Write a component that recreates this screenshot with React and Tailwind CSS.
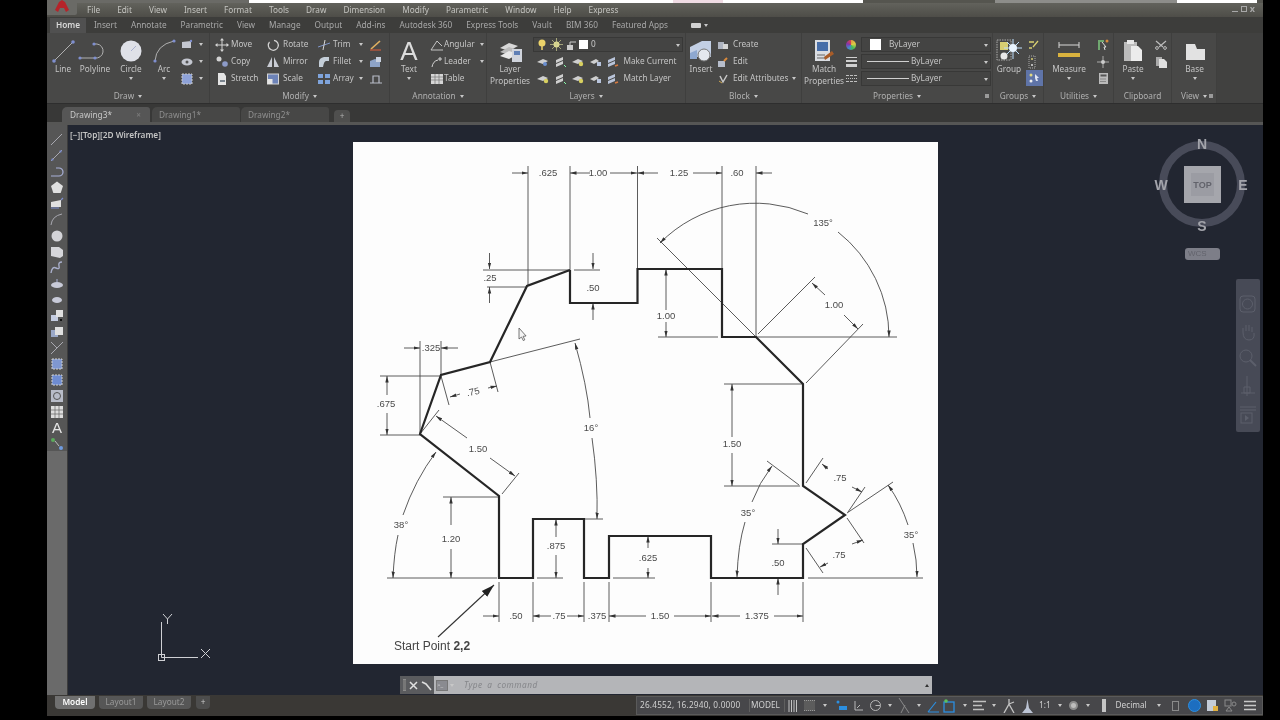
import React from "react";

// ---------- small helpers ----------
const Svg = ({ w = 14, h = 14, children }) => (
  <svg width={w} height={h} viewBox={`0 0 ${w} ${h}`} fill="none" className="block shrink-0">
    {children}
  </svg>
);

const Caret = ({ className = "" }) => (
  <span className={`inline-block w-0 h-0 border-x-[2.5px] border-x-transparent border-t-[3px] border-t-[#c8c8c8] ${className}`} />
);

// ---------- ribbon icons ----------
const LG = "#d4d4d4";
const BL = "#7f8fcf";
const icons = {
  rect: <Svg><path d="M2 4l9-1v7H2z" fill="#c4c7d0" /><circle cx="11" cy="3" r="1.2" fill={BL} /></Svg>,
  ell: <Svg><ellipse cx="7" cy="7" rx="5.5" ry="3.5" fill="#c4c7d0" /><circle cx="7" cy="7" r="1.5" fill="#555" /></Svg>,
  hatch: <Svg><rect x="2" y="2" width="10" height="10" fill="#8ea2d8" stroke="#c8c8c8" strokeDasharray="2 1" /></Svg>,
  move: <Svg><path d="M7 1v12M1 7h12" stroke={LG} /><path d="M7 0l2 2.5H5zM7 14l2-2.5H5zM0 7l2.500-2v4zM14 7l-2.500-2v4z" fill={LG} /></Svg>,
  copy: <Svg><circle cx="4" cy="4" r="2.500" fill={LG} /><circle cx="10" cy="9" r="2.800" fill="#8d9bc8" /></Svg>,
  stretch: <Svg><path d="M3 1h6l2 3v9H3z" fill="#e4e4e4" /><path d="M5 9h5" stroke="#345" strokeWidth="1.200" /></Svg>,
  rotate: <Svg><path d="M8 2.300A5 5 0 1 1 3.500 4" stroke={LG} strokeWidth="1.200" /></Svg>,
  mirror: <Svg><path d="M6 2L1 12h5zM8 2l5 10H8z" fill="#c9ccd4" /></Svg>,
  scale: <Svg><rect x="1.500" y="2" width="11" height="10" fill="#6d83b8" stroke={LG} /><rect x="1.500" y="7" width="5" height="5" fill="#e4e4e4" /></Svg>,
  trim: <Svg><path d="M1 9l12-4" stroke="#7f95c8" /><path d="M8 2L6 12" stroke={LG} /></Svg>,
  fillet: <Svg><path d="M2 12V7q0-4 5-5h5v4H9q-2 0-3 6z" fill="#c4ced8" /></Svg>,
  array: <Svg><path d="M1 2h5v4H1zM8 2h5v4H8zM1 8h5v4H1zM8 8h5v4H8z" fill="#7fa4dc" /></Svg>,
  pen: <Svg><path d="M2 11l9-8" stroke="#e0b060" strokeWidth="1.600" /><path d="M1 12h11" stroke="#c85a3c" strokeWidth="1.200" /></Svg>,
  blocks: <Svg><path d="M1 6l5-2 5 2v6H1z" fill="#8ea4c8" /><path d="M7 2h5v5H7z" fill="#c9d2e0" /></Svg>,
  stamp: <Svg><path d="M1 11h12M4 11V4h6v7" stroke="#b8bcc8" strokeWidth="1.200" /></Svg>,
  angular: <Svg><path d="M1 12h12M1 12l6-9 5 5" stroke="#c4c4c4" /></Svg>,
  leader: <Svg><path d="M2 12q1-6 6-7" stroke={LG} /><path d="M10 2v4M8 4h4" stroke={LG} /></Svg>,
  table: <Svg><path d="M1 2h12v10H1z" fill="#d6d6d6" /><path d="M1 5h12M1 8h12M5 2v10M9 2v10" stroke="#777" strokeWidth=".7" /></Svg>,
  layA: <Svg><path d="M1 7l6-3 5 2-5 3z" fill="#cfcfcf" /><circle cx="9" cy="9" r="2" fill="#6b8fd0" /></Svg>,
  layB: <Svg><path d="M2 5l7-3v3l-7 3zM2 9l7-3v3l-7 3z" fill="#cfcfcf" /><path d="M10 10l2 2" stroke="#8fa" /></Svg>,
  layC: <Svg><path d="M1 7l6-3 5 2-5 3z" fill="#cfcfcf" /><circle cx="10" cy="9" r="2.200" fill="#d8d060" /></Svg>,
  layD: <Svg><path d="M1 7l6-3 3 2-5 3z" fill="#cfcfcf" /><rect x="8" y="7" width="4" height="4" fill="#b8c4dc" /></Svg>,
  layE: <Svg><path d="M2 5l7-3v3l-7 3zM2 9l7-3v3l-7 3z" fill="#b9c4da" /><path d="M9 11l3-1" stroke="#d87a40" strokeWidth="1.500" /></Svg>,
  create: <Svg><path d="M2 4h6v7H2z" fill="#aeb4c0" /><path d="M7 6h5v5H7z" fill="#d6d6d6" /></Svg>,
  edit: <Svg><path d="M2 6h7v6H2z" fill="#b6bdcb" /><path d="M8 6l3-3" stroke="#d88a3c" strokeWidth="2" /></Svg>,
  attrs: <Svg><path d="M4 4l3 6 4-7" stroke="#c8c8c8" strokeWidth="1.500" /><path d="M3 9l3 2" stroke="#d0a850" /></Svg>,
};

const LARGE = {
  line: <Svg w={24} h={24}><path d="M3 22L22 3" stroke="#b0b0b0" /><circle cx="3" cy="22" r="1.800" fill={BL} /><circle cx="22" cy="3" r="1.800" fill={BL} /></Svg>,
  poly: <Svg w={34} h={24}><path d="M2 19h15a7 7 0 0 0 2-14h-3" stroke="#b0b0b0" /><circle cx="2" cy="19" r="1.600" fill={BL} /><circle cx="17" cy="19" r="1.600" fill={BL} /><circle cx="16" cy="5" r="1.600" fill={BL} /></Svg>,
  circle: <Svg w={24} h={24}><circle cx="12" cy="12" r="10.500" fill="#dfe1e8" /><path d="M12 12l5-5" stroke="#a8b0d0" /></Svg>,
  arc: <Svg w={24} h={24}><path d="M3 22Q4 6 22 2" stroke="#b0b0b0" /><circle cx="3" cy="22" r="1.600" fill={BL} /><circle cx="22" cy="2" r="1.600" fill={BL} /></Svg>,
  text: <span className="block text-[26px] leading-[24px] text-[#dcdcdc] font-['Liberation_Sans']">A</span>,
  layers: <Svg w={26} h={24}><path d="M3 9l9-5 9 3-9 5z" fill="#d8d8d8" /><path d="M3 13l9-5 9 3-9 5z" fill="#bbb" /><path d="M3 17l9-5 9 3-9 5z" fill="#e8e8e8" /><rect x="15" y="10" width="10" height="13" fill="#d0d4dc" /><rect x="17" y="12" width="6" height="4" fill="#5f7fb5" /></Svg>,
  insert: <Svg w={24} h={24}><path d="M1 8l12-6h9v16H8l-7-4z" fill="#c2cfe4" /><circle cx="15" cy="16" r="6" fill="#e4e8ee" stroke="#777" /><path d="M1 14l7-3v9H1z" fill="#8ea8d0" /></Svg>,
  match: <Svg w={24} h={24}><rect x="3" y="1" width="15" height="21" fill="#dadde2" /><rect x="5" y="3" width="11" height="9" fill="#476ea9" /><path d="M5 16h8M5 19h8" stroke="#666" /><path d="M13 21l9-6-2-3-8 6z" fill="#a85c28" /></Svg>,
  group: <Svg w={26} h={24}><rect x="1" y="1" width="14" height="20" stroke="#aaa" strokeDasharray="1.500 1" /><rect x="4" y="3" width="8" height="8" fill="#d8cf72" /><circle cx="8" cy="17" r="3.500" fill="#e8e8e8" /><path d="M17 0v20M8 9h18M11 3l12 12M23 3L11 15" stroke="#bfe0ff" /><circle cx="17" cy="9" r="4" fill="#e8f4ff" /></Svg>,
  measure: <Svg w={24} h={24}><path d="M2 6h20M2 3v6M22 3v6" stroke="#d8d8d8" /><rect x="1" y="14" width="22" height="4" fill="#d9b23e" /></Svg>,
  paste: <Svg w={22} h={24}><rect x="2" y="3" width="13" height="19" fill="#bcbcbc" /><rect x="5" y="1" width="7" height="4" fill="#e8e8e8" /><path d="M9 7h7l4 4v11H9z" fill="#ececec" /></Svg>,
  base: <Svg w={22} h={24}><path d="M2 5h9l2 5h8v11H2z" fill="#e2e2e2" /></Svg>,
};

// ---------- ribbon blocks ----------
const Row = ({ icon, label, caret, gap = "gap-[3px]", className = "" }) => (
  <div className={`h-[17px] flex items-center ${gap} ${className}`}>
    <span className="w-[13px] flex justify-center">{icons[icon]}</span>
    <span className="whitespace-nowrap">{label}</span>
    {caret && <Caret className="ml-auto" />}
  </div>
);

const Large = ({ icon, lines, caret, w }) => (
  <div className={`${w} shrink-0 flex flex-col items-center pt-[5px]`}>
    <div className="h-[25px] flex items-center justify-center">{LARGE[icon]}</div>
    {lines.map((l) => (
      <div key={l} className="h-[12px] leading-[12px] whitespace-nowrap">{l}</div>
    ))}
    {caret && <Caret className="mt-[2px]" />}
  </div>
);

const Panel = ({ w, label, caret, launcher, children }) => (
  <div className={`${w} shrink-0 h-full flex flex-col border-r border-[#3f3f3e]`}>
    <div className="h-[56px] flex">{children}</div>
    <div className="h-[15px] pt-px flex items-center justify-center gap-[4px] text-[#b0b0b0] relative">
      {label}
      {caret && <Caret />}
      {launcher && <span className="absolute right-[3px] top-[6px] w-[4px] h-[4px] bg-[#9a9a9a]" />}
    </div>
  </div>
);

const Column = ({ w, children, className = "" }) => (
  <div className={`${w} shrink-0 pt-[3px] ${className}`}>{children}</div>
);

const Dropdown = ({ children, className = "" }) => (
  <div className={`flex items-center bg-[#444443] border border-[#383837] relative ${className}`}>
    {children}
    <Caret className="absolute right-[2px] top-[6px]" />
  </div>
);

const Ribbon = () => (
  <div className="h-[71px] flex bg-[#484847] text-[#c4c4c4] text-[8.25px] border-b border-[#2e2e2e]">
    <Panel w="w-[163px]" label="Draw" caret>
      <div className="w-[3px]" />
      <Large icon="line" lines={["Line"]} w="w-[26px]" />
      <Large icon="poly" lines={["Polyline"]} w="w-[38px]" />
      <Large icon="circle" lines={["Circle"]} caret w="w-[34px]" />
      <Large icon="arc" lines={["Arc"]} caret w="w-[32px]" />
      <Column w="w-[28px]">
        {["rect", "ell", "hatch"].map((i) => (
          <div key={i} className="h-[17px] flex items-center gap-[5px]">
            {icons[i]}
            <Caret />
          </div>
        ))}
      </Column>
    </Panel>
    <Panel w="w-[180px]" label="Modify" caret>
      <div className="w-[5px]" />
      <Column w="w-[51px]">
        <Row icon="move" label="Move" />
        <Row icon="copy" label="Copy" />
        <Row icon="stretch" label="Stretch" />
      </Column>
      <Column w="w-[51px]">
        <Row icon="rotate" label="Rotate" gap="gap-[4px]" />
        <Row icon="mirror" label="Mirror" gap="gap-[4px]" />
        <Row icon="scale" label="Scale" gap="gap-[4px]" />
      </Column>
      <Column w="w-[46px]">
        <Row icon="trim" label="Trim" caret />
        <Row icon="fillet" label="Fillet" caret />
        <Row icon="array" label="Array" caret />
      </Column>
      <Column w="w-[26px]" className="pl-[6px]">
        {["pen", "blocks", "stamp"].map((i) => (
          <div key={i} className="h-[17px] flex items-center">{icons[i]}</div>
        ))}
      </Column>
    </Panel>
    <Panel w="w-[97px]" label="Annotation" caret>
      <Large icon="text" lines={["Text"]} caret w="w-[38px]" />
      <Column w="w-[54px]" className="ml-[2px]">
        <Row icon="angular" label="Angular" caret gap="gap-[1px]" />
        <Row icon="leader" label="Leader" caret gap="gap-[1px]" />
        <Row icon="table" label="Table" gap="gap-[1px]" />
      </Column>
    </Panel>
    <Panel w="w-[199px]" label="Layers" caret>
      <Large icon="layers" lines={["Layer", "Properties"]} w="w-[46px]" />
      <div className="flex-1 pt-[4px]">
        <Dropdown className="h-[15px] w-[150px] bg-[#3b3b3a] gap-[2px] pl-[2px]">
          <Svg w={12} h={13}><circle cx="6" cy="5" r="3.500" fill="#ecd36a" /><path d="M6 8v4" stroke="#ecd36a" strokeWidth="1.500" /></Svg>
          <Svg w={13} h={13}><circle cx="6.500" cy="6.500" r="3" fill="#e0dc90" /><path d="M6.500 0v13M0 6.500h13M2 2l9 9M11 2l-9 9" stroke="#cfcf90" strokeWidth=".7" /></Svg>
          <Svg w={12} h={13}><rect x="2" y="7" width="6" height="5" fill="#ccc" /><path d="M5 7V4h6" stroke="#ccc" /></Svg>
          <span className="w-[9px] h-[9px] bg-white" />
          <span className="text-[#c8c8c8] ml-[1px]">0</span>
        </Dropdown>
        <div className="flex items-center h-[17px] mt-[1px] pl-[3px] gap-[3.500px]">
          {["layA", "layB", "layC", "layD", "layE"].map((i) => <span key={i}>{icons[i]}</span>)}
          <span>Make Current</span>
        </div>
        <div className="flex items-center h-[17px] pl-[3px] gap-[3.500px]">
          {["layC", "layB", "layC", "layD", "layE"].map((i) => <span key={i}>{icons[i]}</span>)}
          <span>Match Layer</span>
        </div>
      </div>
    </Panel>
    <Panel w="w-[116px]" label="Block" caret>
      <Large icon="insert" lines={["Insert"]} w="w-[30px]" />
      <Column w="w-[80px]" className="ml-[0px]">
        <Row icon="create" label="Create" gap="gap-[4px]" />
        <Row icon="edit" label="Edit" gap="gap-[4px]" />
        <Row icon="attrs" label="Edit Attributes" caret gap="gap-[4px]" />
      </Column>
    </Panel>
    <Panel w="w-[191px]" label="Properties" caret launcher>
      <Large icon="match" lines={["Match", "Properties"]} w="w-[44px]" />
      <div className="w-[15px] pt-[3px] flex flex-col">
        <div className="h-[17px] flex items-center"><span className="w-[10px] h-[10px] rounded-full bg-[conic-gradient(#d94,#dc4,#4b5,#48c,#83a,#d44)]" /></div>
        <div className="h-[17px] flex flex-col justify-center gap-[2px]">
          <span className="h-px w-[11px] bg-[#d0d0d0]" /><span className="h-[2px] w-[11px] bg-[#d0d0d0]" /><span className="h-[3px] w-[11px] bg-[#d0d0d0]" />
        </div>
        <div className="h-[17px] flex flex-col justify-center gap-[2px]">
          <span className="h-px w-[11px] border-t border-dashed border-[#c0c0c0]" /><span className="h-px w-[11px] border-t border-dotted border-[#c0c0c0]" /><span className="h-px w-[11px] border-t border-dashed border-[#c0c0c0]" />
        </div>
      </div>
      <div className="w-[130px] pt-[4px] flex flex-col gap-[2px]">
        <Dropdown className="h-[15px]">
          <span className="w-[11px] h-[11px] bg-white ml-[8px] mr-[8px]" />
          <span>ByLayer</span>
        </Dropdown>
        <Dropdown className="h-[15px]">
          <span className="w-[42px] h-px bg-[#d0d0d0] ml-[5px] mr-[2px]" />
          <span>ByLayer</span>
        </Dropdown>
        <Dropdown className="h-[15px]">
          <span className="w-[42px] h-px bg-[#d0d0d0] ml-[5px] mr-[2px]" />
          <span>ByLayer</span>
        </Dropdown>
      </div>
    </Panel>
    <Panel w="w-[51px]" label="Groups" caret>
      <Large icon="group" lines={["Group"]} w="w-[32px]" />
      <div className="pt-[3px] w-[18px] flex flex-col items-center">
        <div className="h-[17px] flex items-center">
          <Svg w={12} h={12}><path d="M1 3h5M1 9h3M5 8l5-6" stroke="#d8cf72" strokeWidth="1.300" /></Svg>
        </div>
        <div className="h-[17px] flex items-center">
          <Svg w={12} h={14}><rect x="1" y="1" width="6" height="12" stroke="#aaa" strokeDasharray="1 1" /><circle cx="4" cy="4" r="1" fill="#d8cf72" /><circle cx="4" cy="10" r="1" fill="#ddd" /></Svg>
        </div>
        <div className="w-[17px] h-[16px] bg-[#5f74a8] flex items-center justify-center">
          <Svg w={12} h={12}><circle cx="3" cy="3" r="1.500" fill="#e0d880" /><circle cx="3" cy="9" r="1.500" fill="#eee" /><path d="M7 2l4 4-2 0 1 3-2 0-1-3z" fill="#dfe6f5" /></Svg>
        </div>
      </div>
    </Panel>
    <Panel w="w-[70px]" label="Utilities" caret>
      <Large icon="measure" lines={["Measure"]} caret w="w-[50px]" />
      <div className="pt-[3px] w-[18px] flex flex-col items-center">
        <div className="h-[17px] flex items-center">
          <Svg w={12} h={13}><path d="M1 2h6v2H3v8H1z" fill="#70a870" /><path d="M5 4l4 5-2 0 1 3" stroke="#ddd" /><circle cx="10" cy="3" r="1.500" fill="#d88a3c" /></Svg>
        </div>
        <div className="h-[17px] flex items-center">
          <Svg w={12} h={12}><path d="M6 0v12M0 6h12" stroke="#aaa" /><circle cx="6" cy="6" r="2" fill="#ccc" /></Svg>
        </div>
        <div className="h-[17px] flex items-center">
          <Svg w={9} h={11}><rect width="9" height="11" fill="#bbb" /><rect x="1.500" y="1.500" width="6" height="2" fill="#555" /><path d="M1.500 6h6M1.500 8.500h6" stroke="#555" strokeDasharray="1 1" /></Svg>
        </div>
      </div>
    </Panel>
    <Panel w="w-[58px]" label="Clipboard">
      <Large icon="paste" lines={["Paste"]} caret w="w-[38px]" />
      <div className="pt-[3px] w-[18px] flex flex-col items-center">
        <div className="h-[17px] flex items-center">
          <Svg w={12} h={10}><path d="M1 1l7 6M11 1L4 7" stroke="#bdbdbd" strokeWidth="1.200" /><circle cx="2" cy="8" r="1.400" stroke="#bdbdbd" /><circle cx="10" cy="8" r="1.400" stroke="#bdbdbd" /></Svg>
        </div>
        <div className="h-[17px] flex items-center">
          <Svg w={11} h={12}><rect y="1" width="6" height="9" fill="#aaa" /><path d="M3 3h5l3 3v6H3z" fill="#e0e0e0" /></Svg>
        </div>
      </div>
    </Panel>
    <Panel w="w-[45px]" label="View" caret launcher>
      <Large icon="base" lines={["Base"]} caret w="w-[45px]" />
    </Panel>
    <div className="flex-1 bg-[#414140]" />
  </div>
);

// ---------- the sheet drawing ----------
const profile = "570,270 570,303 637.500,303 637.500,269 722,269 722,337 756,337 803,384 803,486 845,515 803,544 803,578 711,578 711,536 609,536 609,578 584,578 584,519 533,519 533,578 499,578 499,496 420,434 441,375 490,362 527,286 570,270";

// plain thin lines
const thin = [
  [528, 166, 528, 286], [570, 166, 570, 270], [637.5, 166, 637.5, 269], [722, 166, 722, 269], [756, 166, 756, 337],
  [483, 270, 570, 270], [574, 270, 600, 270], [487, 287, 527, 287],
  [420, 341, 420, 434], [441, 341, 441, 375], [380, 376, 441, 376], [380, 435, 420, 435],
  [441, 376, 449, 405], [490, 362, 498, 392], [490, 362, 580, 339],
  [584, 519, 603, 519], [420, 434, 439, 410], [502, 494, 519, 473],
  [443, 497, 499, 497], [387, 578, 497, 578], [499, 582, 499, 622], [533, 582, 533, 622], [584, 582, 584, 622],
  [609, 582, 609, 622], [711, 582, 711, 622], [803, 582, 803, 622],
  [537, 578, 563, 578], [613, 578, 655, 578],
  [657, 238, 756, 337], [658, 337, 718, 337], [756, 337, 897, 337],
  [758, 334, 815, 277], [806, 383, 863, 324],
  [724, 384, 803, 384], [724, 486, 800, 486], [767, 461, 799, 485],
  [806, 483, 823, 458], [848, 512, 865, 487], [847, 513, 893, 482], [808, 578, 923, 578],
  [806, 548, 823, 573], [847, 518, 864, 543], [772, 544, 803, 544],
];

// thin lines that end in an arrow head
const arrows = [
  [512, 173, 528, 173], [590, 173, 570, 173], [610, 173, 637, 173], [658, 173, 637.5, 173], [693, 173, 722, 173], [772, 173, 756, 173],
  [489.5, 253, 489.5, 269], [489.5, 303, 489.5, 287], [593, 253, 593, 269], [593, 320, 593, 303],
  [404, 348, 420, 348], [458, 348, 441, 348], [387, 395, 387, 376], [387, 413, 387, 435],
  [460, 394, 450, 397], [488, 388, 497, 386], [467, 438, 436, 416], [490, 458, 515, 476],
  [451, 525, 451, 497], [451, 549, 451, 578], [483, 616, 499, 616], [551, 616, 533, 616], [567, 616, 584, 616], [646, 616, 609, 616],
  [674, 616, 711, 616], [740, 616, 712, 616], [774, 616, 803, 616],
  [556, 537, 556, 519], [556, 555, 556, 578], [648, 548, 648, 536], [648, 568, 648, 578],
  [666, 310, 666, 269], [666, 322, 666, 337], [825, 295, 812, 283], [844, 315, 858, 329],
  [732, 437, 732, 384], [732, 453, 732, 486], [828, 469, 822, 464], [852, 487, 862, 492],
  [828, 563, 820, 567], [852, 544, 863, 540], [778, 529, 778, 544], [778, 595, 778, 578],
];

// arcs, each one drawn towards its arrow head
const curves = [
  "M808 214A134 134 0 0 0 660 243",
  "M838 232A134 134 0 0 1 889 337",
  "M590 418Q587 385 575 343",
  "M592 438Q598 480 597 519",
  "M398 535Q394 553 393 578",
  "M403 515Q415 480 436 452",
  "M745 522Q738 545 737 577",
  "M752 502Q759 483 772 466",
  "M908 525Q901 503 888 485",
  "M913 543Q917 560 917 577",
];

const labels = [
  [548, 176, ".625"], [598, 176, "1.00"], [679, 176, "1.25"], [737, 176, ".60"], [490, 281, ".25"], [593, 290.500, ".50"],
  [431, 351, ".325"], [386, 407, ".675"], [478, 452, "1.50"], [451, 542, "1.20"], [401, 528, "38°"], [591, 431, "16°"],
  [516, 619, ".50"], [559, 619, ".75"], [597, 619, ".375"], [660, 619, "1.50"], [757, 619, "1.375"],
  [556, 549, ".875"], [648, 561, ".625"], [823, 226, "135°"], [666, 319, "1.00"], [834, 308, "1.00"], [732, 447, "1.50"],
  [748, 516, "35°"], [840, 481, ".75"], [911, 538, "35°"], [839, 558, ".75"], [778, 565.500, ".50"],
];

const Sheet = () => (
  <div className="absolute left-[285px] top-[17px] w-[585px] h-[522px] bg-[#fdfdfd]">
    <svg width="585" height="522" viewBox="353 142 585 522" className="block font-['Liberation_Sans']">
      <defs>
        <marker id="head" markerWidth="7" markerHeight="5" refX="6.500" refY="2.500" orient="auto" markerUnits="userSpaceOnUse">
          <path d="M0 .8L6.500 2.500L0 4.200z" fill="#333" />
        </marker>
        <marker id="bighead" markerWidth="14" markerHeight="10" refX="13" refY="5" orient="auto" markerUnits="userSpaceOnUse">
          <path d="M0 1L13 5L0 9z" fill="#222" />
        </marker>
      </defs>
      {thin.map(([a, b, c, d], i) => (
        <line key={i} x1={a} y1={b} x2={c} y2={d} stroke="#4a4a4a" strokeWidth=".9" />
      ))}
      {arrows.map(([a, b, c, d], i) => (
        <line key={i} x1={a} y1={b} x2={c} y2={d} stroke="#4a4a4a" strokeWidth=".9" markerEnd="url(#head)" />
      ))}
      {curves.map((d) => (
        <path key={d} d={d} fill="none" stroke="#4a4a4a" strokeWidth=".9" markerEnd="url(#head)" />
      ))}
      <polyline points={profile} fill="none" stroke="#262626" strokeWidth="2.200" strokeLinejoin="miter" />
      <line x1="438" y1="637" x2="494" y2="585" stroke="#333" strokeWidth="1.100" markerEnd="url(#bighead)" />
      {labels.map(([x, y, t]) => (
        <text key={x + "-" + y} x={x} y={y} textAnchor="middle" fontSize="9.500" fill="#4a4a4a">{t}</text>
      ))}
      <text x="473" y="395" textAnchor="middle" fontSize="9.500" fill="#4a4a4a" transform="rotate(-12 473 392)">.75</text>
      <text x="394" y="650" fontSize="12" fill="#444">
        Start Point <tspan fontWeight="700">2,2</tspan>
      </text>
      {/* mouse pointer */}
      <path d="M519 328v11l2.500-2 1.800 3.600 1.500-.8-1.700-3.500 3-.3z" fill="#f4f4f4" stroke="#555" strokeWidth=".8" />
    </svg>
  </div>
);

// ---------- viewport overlays ----------
const ViewCube = () => (
  <div className="absolute left-[1083px] top-[10px]">
    <svg width="110" height="100" viewBox="-5 0 110 100" className="block font-['Liberation_Sans']">
      <circle cx="46" cy="49" r="39" fill="none" stroke="#484b59" strokeWidth="8" />
      <rect x="28" y="31" width="37" height="37" fill="#a5a6ac" />
      <rect x="35" y="38" width="23" height="23" fill="#9b9ca3" />
      <text x="46.500" y="53" textAnchor="middle" fontSize="9" fontWeight="700" fill="#62636b">TOP</text>
      <text x="46" y="14" textAnchor="middle" fontSize="14" fontWeight="700" fill="#a3a4ab">N</text>
      <text x="46" y="96" textAnchor="middle" fontSize="14" fontWeight="700" fill="#a3a4ab">S</text>
      <text x="5" y="55" textAnchor="middle" fontSize="14" fontWeight="700" fill="#a3a4ab">W</text>
      <text x="87" y="55" textAnchor="middle" fontSize="14" fontWeight="700" fill="#a3a4ab">E</text>
    </svg>
    <div className="absolute left-[34px] top-[113px] w-[35px] h-[12px] rounded-[3px] bg-[#7d7e88] text-[8px] leading-[12px] pl-[3px] text-[#62636c] font-['Liberation_Sans']">WCS</div>
  </div>
);

const NavBar = () => (
  <div className="absolute left-[1168px] top-[154px] w-[24px] h-[153px] bg-[#474a56] rounded-[2px] flex flex-col items-center pt-[14px] gap-[8px]">
    <Svg w={18} h={22}><rect x="1" y="3" width="15" height="16" rx="3" stroke="#5c5f6b" /><circle cx="8.500" cy="11" r="5" stroke="#5c5f6b" /></Svg>
    <Svg w={16} h={18}><path d="M3 9V5M6 8V2M9 8V2M12 9V4M3 9q0 8 6 8t5-7" stroke="#5c5f6b" /></Svg>
    <Svg w={18} h={18}><circle cx="7" cy="7" r="6" stroke="#5c5f6b" /><path d="M11 11l6 6" stroke="#5c5f6b" strokeWidth="2" /></Svg>
    <Svg w={18} h={22}><path d="M8 1v20M2 18h14M5 12h6v6H5z" stroke="#5c5f6b" /></Svg>
    <Svg w={18} h={20}><path d="M1 2h16M1 5h16" stroke="#5c5f6b" /><rect x="2" y="8" width="11" height="10" stroke="#5c5f6b" /><path d="M6 10l4 3-4 3z" fill="#5c5f6b" /></Svg>
  </div>
);

const Ucs = () => (
  <div className="absolute left-[88px] top-[484px]">
    <svg width="60" height="56" viewBox="0 0 60 56" className="block" fill="none" stroke="#cfd0d4" strokeWidth="1">
      <path d="M5.500 13V48.500H42" />
      <rect x="2.500" y="45.500" width="6" height="6" />
      <path d="M7 5l4.500 5L16 5M11.500 10v5" />
      <path d="M45 40l9 9M54 40l-9 9" />
    </svg>
  </div>
);

const CommandLine = () => (
  <div className="absolute left-[332px] bottom-[1px] w-[532px] h-[18px] flex text-[8.25px] bg-[#b4b5b8]">
    <div className="w-[34px] bg-[#5a5b5e] flex items-center gap-[3px] pl-[3px] shrink-0">
      <span className="w-[3px] h-[12px] border-y border-[#8a8a8a] bg-[#777]" />
      <Svg w={9} h={9}><path d="M1 1l7 7M8 1L1 8" stroke="#e0e0e0" strokeWidth="1.500" /></Svg>
      <Svg w={11} h={11}><path d="M1 2l4 2 5 6" stroke="#ddd" strokeWidth="1.600" /></Svg>
    </div>
    <div className="flex items-center gap-[2px] pl-[2px] flex-1">
      <span className="w-[12px] h-[11px] bg-[#8a8b90] border border-[#777] text-[6px] leading-[9px] text-[#d8d8d8]">&gt;_</span>
      <Caret className="border-t-[#777]" />
      <span className="italic tracking-[0.5px] [word-spacing:2px] text-[#85868a] ml-[8px]">Type a command</span>
      <span className="ml-auto mr-[3px] w-0 h-0 border-x-[2.5px] border-x-transparent border-b-[3px] border-b-[#333]" />
    </div>
  </div>
);

// ---------- left toolbar ----------
const toolbarIcons = [
  <path d="M2 13L13 2" stroke="#a8a8b0" />,
  <><path d="M2 13L13 2" stroke="#a8a8b0" /><path d="M2 13l3-1-2-2zM13 2l-3 1 2 2z" fill={BL} /></>,
  <path d="M2 12h8a4 4 0 0 0 0-8H7" stroke="#a8b0d8" strokeWidth="1.200" />,
  <path d="M8 1.500l6 4.500-2.300 7H4.300L2 6z" fill="#e0e0e0" />,
  <><path d="M2 6l10-2v7H2z" fill="#e0e0e0" /><path d="M2 12h8M14 2l-2 2" stroke={BL} strokeWidth="1.200" /></>,
  <path d="M2 13Q3 4 13 2" stroke="#a8a8b0" />,
  <circle cx="8" cy="8" r="5.500" fill="#d4d4d8" />,
  <path d="M2 3h8l4 3v6l-3 2-9-2z" fill="#d6d6da" />,
  <path d="M2 13Q3 6 7 8T10 6 13 2" stroke="#a8aeca" strokeWidth="1.400" />,
  <><ellipse cx="8" cy="9" rx="6" ry="3" fill="#c8cad8" /><path d="M8 3v3" stroke="#a8b0d8" /></>,
  <ellipse cx="8" cy="8" rx="5" ry="3" fill="#c8cad8" />,
  <><rect x="2" y="7" width="7" height="6" fill="#c4cce0" /><rect x="7" y="2" width="7" height="7" fill="#e0e0e0" /><rect x="11" y="11" width="2" height="2" fill="#111" /></>,
  <><rect x="2" y="6" width="7" height="7" fill="#9aa8c8" /><rect x="6" y="3" width="8" height="8" fill="#e0e0e0" /></>,
  <path d="M2 2l6 6M14 2L2 14" stroke="#a8a8b0" />,
  <rect x="3" y="3" width="10" height="10" fill="#7f97d0" stroke="#d0d0d0" strokeDasharray="2 1" />,
  <rect x="3" y="3" width="10" height="10" fill="#6f8cd0" stroke="#d0d0d0" strokeDasharray="2 1" />,
  <><rect x="2" y="2" width="12" height="12" fill="#b8bcc8" /><circle cx="8" cy="8" r="3.500" stroke="#555" /></>,
  <><rect x="2" y="2" width="12" height="12" fill="#dedede" /><path d="M2 6h12M2 10h12M6 2v12M10 2v12" stroke="#666" strokeWidth=".7" /></>,
  null,
  <><circle cx="4" cy="4" r="2" fill="#5cab5c" /><circle cx="12" cy="12" r="2" fill="#6f9be0" /><path d="M6 5l4 5" stroke="#bbb" /></>,
];

const LeftBar = () => (
  <div className="w-[21px] shrink-0 bg-[#6a6a6a] border-r border-[#3c3c3c]">
    <div className="bg-[#565656] h-[326px] pt-[7px] flex flex-col items-center">
      {toolbarIcons.map((ic, i) => (
        <div key={i} className="h-[16px] w-[16px] flex items-center justify-center">
          {ic ? <Svg w={16} h={16}>{ic}</Svg> : <span className="text-[15px] leading-[16px] text-[#e4e4e4] font-['Liberation_Sans']">A</span>}
        </div>
      ))}
    </div>
  </div>
);

// ---------- status bar ----------
const Sm = ({ w, children }) => (
  <div className={`${w} shrink-0 flex items-center justify-center`}>{children}</div>
);

const StatusBar = () => (
  <div className="w-[627px] h-[19px] flex items-center bg-[#47474a] border border-[#5a5a5a] text-[8.25px] text-[#d0d0d0] whitespace-nowrap">
    <div className="w-[112px] shrink-0 pl-[3px] tracking-[0.2px]">26.4552, 16.2940, 0.0000</div>
    <div className="w-[36px] shrink-0 pl-px border-x border-[#5f5f5f]">MODEL</div>
    <Sm w="w-[16.5px]"><Svg w={11} h={12}><path d="M1 0v12M3.500 0v12M6 0v12M8.500 0v12" stroke="#c4c4c4" /></Svg></Sm>
    <Sm w="w-[15.5px]"><span className="w-[11px] h-[11px] border-y border-dotted border-[#9a9a9a] bg-[#5c5c5c]" /></Sm>
    <Sm w="w-[15.5px]"><Caret /></Sm>
    <Sm w="w-[17px]"><Svg w={13} h={13}><rect x="4" y="7" width="8" height="4" fill="#2c8fe0" /><circle cx="3" cy="3" r="1.500" fill="#2c8fe0" /></Svg></Sm>
    <Sm w="w-[18px]"><Svg w={11} h={12}><path d="M2 1v9h8M4 8l3-3" stroke="#b8b8b8" /></Svg></Sm>
    <Sm w="w-[16px]"><Svg w={13} h={13}><circle cx="6.500" cy="6.500" r="5" stroke="#b8b8b8" /><path d="M6.500 6.500H11" stroke="#b8b8b8" /></Svg></Sm>
    <Sm w="w-[13px]"><Caret /></Sm>
    <Sm w="w-[14.5px]"><Svg w={12} h={15}><path d="M1 0l10 15M7 7L3 15" stroke="#8a8a8a" /></Svg></Sm>
    <Sm w="w-[15px]"><Caret /></Sm>
    <Sm w="w-[15.5px]"><Svg w={14} h={14}><path d="M1 13h11M1 13L9 3" stroke="#2c8fe0" strokeWidth="1.200" /></Svg></Sm>
    <Sm w="w-[15.5px]"><Svg w={14} h={15}><rect x="2" y="4" width="10" height="10" stroke="#2c8fe0" strokeWidth="1.300" /><circle cx="4" cy="3" r="1.800" fill="#5cc05c" /></Svg></Sm>
    <Sm w="w-[15px]"><Caret /></Sm>
    <Sm w="w-[14.5px]"><Svg w={13} h={11}><path d="M0 1.500h13M0 5.500h9M0 9.500h11" stroke="#c0c0c0" strokeWidth="1.500" /></Svg></Sm>
    <Sm w="w-[14.5px]"><Caret /></Sm>
    <Sm w="w-[17px]"><Svg w={13} h={14}><path d="M6 0v5L1 14M6 5l5 9M6 5L11 3" stroke="#c4c4c4" strokeWidth="1.300" /></Svg></Sm>
    <Sm w="w-[18px]"><Svg w={13} h={14}><path d="M6.500 0L5 9 1 14h11L8 9z" fill="#bcc4d4" /></Svg></Sm>
    <div className="w-[18px] shrink-0 pl-[3px]">1:1</div>
    <Sm w="w-[12px]"><Caret /></Sm>
    <Sm w="w-[14.5px]"><span className="w-[9px] h-[9px] rounded-full bg-[#bdbdbd] border-[2px] border-[#8c8c8c]" /></Sm>
    <Sm w="w-[15px]"><Caret /></Sm>
    <Sm w="w-[17px]"><span className="w-[4px] h-[13px] bg-[#c4c4c4]" /></Sm>
    <div className="w-[39.5px] shrink-0 pl-[3px]">Decimal</div>
    <Sm w="w-[14.5px]"><Caret /></Sm>
    <Sm w="w-[18px]"><span className="w-[7px] h-[10px] border border-[#8a8a8a]" /></Sm>
    <Sm w="w-[19px]"><span className="w-[13px] h-[13px] rounded-full bg-[#1d6ec0] border border-[#2c8fe0]" /></Sm>
    <Sm w="w-[17px]"><Svg w={13} h={13}><rect x="1" y="1" width="9" height="11" fill="#c4ccd8" /><rect x="7" y="7" width="5" height="5" fill="#e0b040" /></Svg></Sm>
    <Sm w="w-[19px]"><Svg w={13} h={13}><rect x="1" y="1" width="6" height="6" stroke="#8a8a8a" /><circle cx="10" cy="5" r="2" stroke="#8a8a8a" /><path d="M2 12l3-4 3 4z" stroke="#8a8a8a" /></Svg></Sm>
    <Sm w="w-[20px]"><Svg w={12} h={11}><path d="M0 1.500h12M0 5.500h12M0 9.500h12" stroke="#c8c8c8" strokeWidth="1.500" /></Svg></Sm>
  </div>
);

// ---------- top bars ----------
const menu = ["File", "Edit", "View", "Insert", "Format", "Tools", "Draw", "Dimension", "Modify", "Parametric", "Window", "Help", "Express"];
const tabs = ["Insert", "Annotate", "Parametric", "View", "Manage", "Output", "Add-ins", "Autodesk 360", "Express Tools", "Vault", "BIM 360", "Featured Apps"];

const App = () => (
  <div className="w-[1280px] h-[720px] flex bg-black overflow-hidden font-['Noto_Sans',sans-serif] blur-[0.4px]">
    <div className="w-[47px] shrink-0" />
    <div className="w-[1216px] shrink-0 h-full flex flex-col">
      {/* title bar leftover along the top edge */}
      <div className="h-[3px] flex shrink-0">
        <div className="w-[202px] bg-[#6a6a66]" />
        <div className="w-[424px] bg-white" />
        <div className="w-[50px] bg-[#f0dce4]" />
        <div className="w-[140px] bg-white" />
        <div className="w-[132px] bg-[#55554f]" />
        <div className="w-[182px] bg-[#8d8d8a]" />
        <div className="w-[80px] bg-white" />
        <div className="flex-1 bg-[#55554f]" />
      </div>
      <div className="h-[14px] shrink-0 flex items-center pt-px bg-gradient-to-b from-[#62625c] to-[#4e4d48] text-[8.25px] text-[#c4c4c0] relative pl-[40px] gap-[17px]">
        {menu.map((m) => <span key={m}>{m}</span>)}
        <div className="absolute right-[8px] top-[1px] flex items-center gap-[3px]">
          <span className="w-[6px] h-px bg-[#a8a8a8] mt-[5px]" />
          <span className="w-[6px] h-[6px] border border-[#a8a8a8]" />
          <span className="text-[9px] leading-[10px] font-bold text-[#a8a8a8]">x</span>
        </div>
      </div>
      <div className="h-[16px] shrink-0 flex items-end bg-[#3d3d3b] text-[8.25px] text-[#a8a8a8]">
        <div className="ml-[3px] w-[36px] h-[15px] flex items-center justify-center bg-[#505050] text-[#d8d8d8] font-semibold">Home</div>
        <div className="h-[15px] flex items-center pl-[8px] gap-[14px] whitespace-nowrap">
          {tabs.map((t) => <span key={t}>{t}</span>)}
          <span className="flex items-center gap-[3px] ml-[9px]">
            <span className="w-[10px] h-[5px] rounded-[1px] bg-[#d0d0d0]" />
            <Caret />
          </span>
        </div>
      </div>
      <Ribbon />
      {/* file tabs */}
      <div className="h-[21px] shrink-0 flex items-end bg-[#383837] border-b-[3px] border-[#565655] pl-[15px] text-[8.25px] text-[#8f8f8f]">
        <div className="w-[88px] h-[15px] pt-px rounded-tl-[5px] rounded-tr-[3px] bg-[#565656] flex items-center pl-[8px] text-[#c8c8c8] relative">
          Drawing3*
          <span className="absolute right-[9px] text-[#777] font-bold">×</span>
        </div>
        <div className="w-[88px] h-[15px] pt-px ml-[2px] rounded-tl-[5px] rounded-tr-[3px] bg-[#474746] flex items-center pl-[7px]">Drawing1*</div>
        <div className="w-[88px] h-[15px] pt-px ml-[1px] rounded-tl-[5px] rounded-tr-[3px] bg-[#474746] flex items-center pl-[7px]">Drawing2*</div>
        <div className="w-[16px] h-[12px] ml-[5px] rounded-t-[4px] bg-[#4f4f4e] flex items-center justify-center text-[#b0b0b0]">+</div>
      </div>
      <div className="flex-1 min-h-0 flex">
        <LeftBar />
        <div className="flex-1 relative bg-[#222631]">
          <div className="absolute left-[2px] top-[4px] text-[8.25px] leading-[12px] font-semibold text-[#c4c4c4]">[−][Top][2D Wireframe]</div>
          <Sheet />
          <ViewCube />
          <NavBar />
          <Ucs />
          <CommandLine />
        </div>
      </div>
      {/* layout tabs and status bar */}
      <div className="h-[21px] shrink-0 flex justify-between bg-[#3a3835] text-[8.25px] text-[#9a9a9a] pt-px">
        <div className="flex items-start gap-[4px] pl-[8px]">
          <div className="w-[40px] h-[13px] rounded-b-[4px] bg-[#707070] flex items-center justify-center text-white font-semibold">Model</div>
          <div className="w-[44px] h-[13px] rounded-b-[4px] bg-[#565656] flex items-center justify-center">Layout1</div>
          <div className="w-[44px] h-[13px] rounded-b-[4px] bg-[#565656] flex items-center justify-center">Layout2</div>
          <div className="w-[14px] h-[13px] ml-px rounded-b-[4px] bg-[#4d4d4d] flex items-center justify-center text-[#c8c8c8]">+</div>
        </div>
        <StatusBar />
      </div>
      <div className="h-[4px] shrink-0 bg-black" />
    </div>
    <div className="flex-1" />
    {/* application button, lies over the top bars */}
    <div className="absolute left-[47px] top-0 w-[30px] h-[15px] bg-[#6a6a66] rounded-br-[2px] flex justify-center">
      <svg width="16" height="12" viewBox="0 0 16 12" className="block"><path d="M8 0l3 2 4 8-3 2-2-4H6l-2 4-3-2 4-8z" fill="#b5232a" /></svg>
    </div>
  </div>
);

export default App;
